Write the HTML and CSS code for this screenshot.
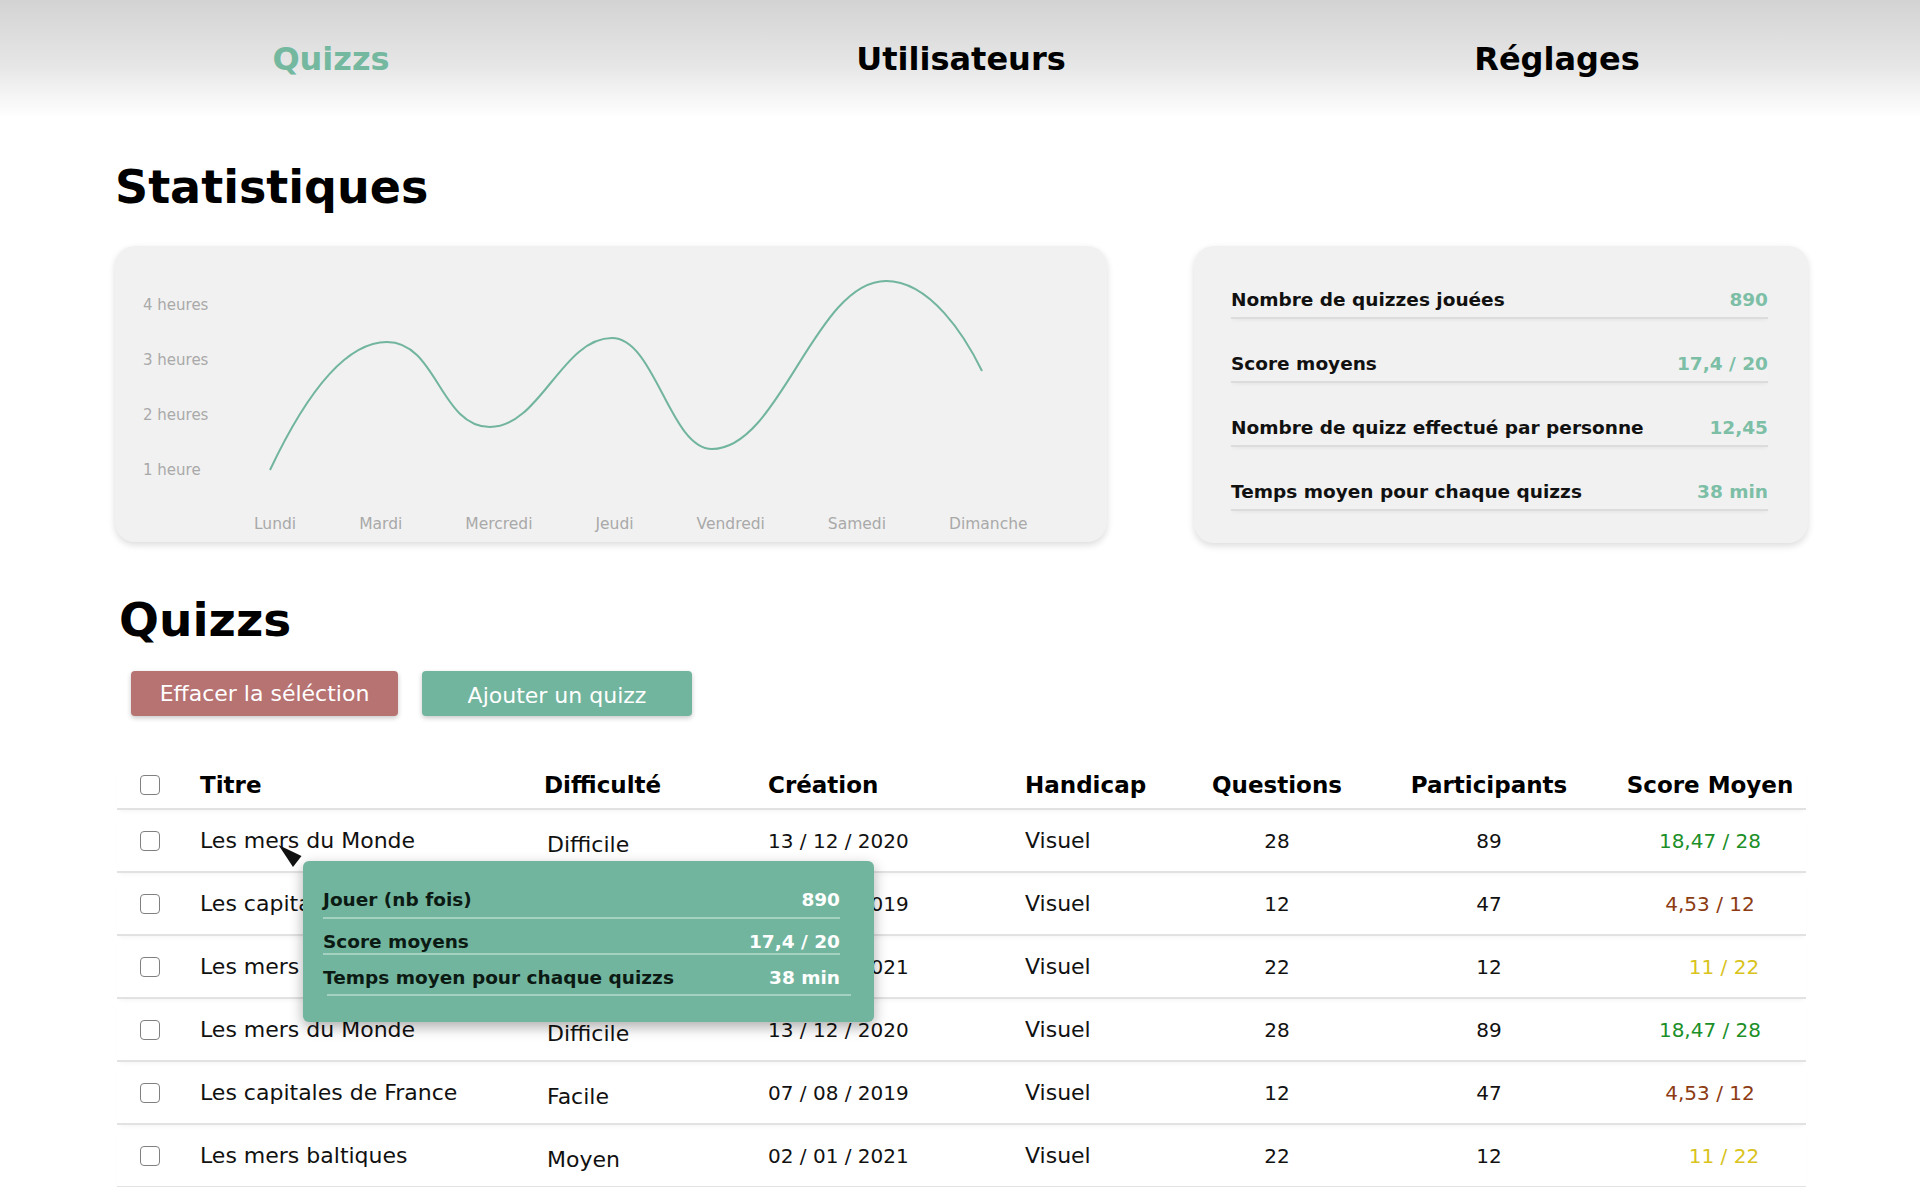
FILE: index.html
```html
<!DOCTYPE html>
<html lang="fr">
<head>
<meta charset="utf-8">
<title>Statistiques – Quizzs</title>
<link rel="stylesheet" href="styles.css">
</head>
<body>
<header class="nav">
  <a class="nav-item nav-quizzs active">Quizzs</a>
  <a class="nav-item nav-users">Utilisateurs</a>
  <a class="nav-item nav-settings">Réglages</a>
</header>

<main class="page">
  <h1 class="section-title">Statistiques</h1>

  <div class="stats-row">
    <section class="card chart-card">
      <div class="y-axis">
        <span>4 heures</span>
        <span>3 heures</span>
        <span>2 heures</span>
        <span>1 heure</span>
      </div>
      <div class="x-axis">
        <span>Lundi</span>
        <span>Mardi</span>
        <span>Mercredi</span>
        <span>Jeudi</span>
        <span>Vendredi</span>
        <span>Samedi</span>
        <span>Dimanche</span>
      </div>
      <svg class="curve" viewBox="0 0 992 296" width="992" height="296" aria-hidden="true">
        <path d="M155,224 C190,150 230,96 272,96 C322,96 325,181 375,181 C425,181 447,92 497,92 C540,92 555,203 597,203 C665,203 700,35 771,35 C815,35 850,90 867,125" fill="none" stroke="#72b59e" stroke-width="2"/>
      </svg>
    </section>

    <section class="card summary-card">
      <div class="summary-row"><span>Nombre de quizzes jouées</span><span class="summary-value">890</span></div>
      <div class="summary-row"><span>Score moyens</span><span class="summary-value">17,4 / 20</span></div>
      <div class="summary-row"><span>Nombre de quizz effectué par personne</span><span class="summary-value">12,45</span></div>
      <div class="summary-row summary-last"><span>Temps moyen pour chaque quizzs</span><span class="summary-value">38 min</span></div>
    </section>
  </div>

  <h1 class="section-title quizz-title">Quizzs</h1>

  <div class="actions">
    <button class="btn btn-danger">Effacer la séléction</button>
    <button class="btn btn-primary">Ajouter un quizz</button>
  </div>

  <div class="table">
    <div class="row head">
      <span class="cell"><span class="checkbox"></span></span>
      <span class="cell">Titre</span>
      <span class="cell">Difficulté</span>
      <span class="cell">Création</span>
      <span class="cell">Handicap</span>
      <span class="cell center">Questions</span>
      <span class="cell center">Participants</span>
      <span class="cell center">Score Moyen</span>
    </div>

    <div class="row">
      <span class="cell"><span class="checkbox"></span></span>
      <span class="cell">Les mers du Monde</span>
      <span class="cell low">Difficile</span>
      <span class="cell num">13 / 12 / 2020</span>
      <span class="cell">Visuel</span>
      <span class="cell center num">28</span>
      <span class="cell center num">89</span>
      <span class="cell center num score-good">18,47 / 28</span>
    </div>
    <div class="row">
      <span class="cell"><span class="checkbox"></span></span>
      <span class="cell">Les capitales de France</span>
      <span class="cell low">Facile</span>
      <span class="cell num">07 / 08 / 2019</span>
      <span class="cell">Visuel</span>
      <span class="cell center num">12</span>
      <span class="cell center num">47</span>
      <span class="cell center num score-bad">4,53 / 12</span>
    </div>
    <div class="row">
      <span class="cell"><span class="checkbox"></span></span>
      <span class="cell">Les mers baltiques</span>
      <span class="cell low">Moyen</span>
      <span class="cell num">02 / 01 / 2021</span>
      <span class="cell">Visuel</span>
      <span class="cell center num">22</span>
      <span class="cell center num">12</span>
      <span class="cell center num score-mid">11 / 22</span>
    </div>
    <div class="row">
      <span class="cell"><span class="checkbox"></span></span>
      <span class="cell">Les mers du Monde</span>
      <span class="cell low">Difficile</span>
      <span class="cell num">13 / 12 / 2020</span>
      <span class="cell">Visuel</span>
      <span class="cell center num">28</span>
      <span class="cell center num">89</span>
      <span class="cell center num score-good">18,47 / 28</span>
    </div>
    <div class="row">
      <span class="cell"><span class="checkbox"></span></span>
      <span class="cell">Les capitales de France</span>
      <span class="cell low">Facile</span>
      <span class="cell num">07 / 08 / 2019</span>
      <span class="cell">Visuel</span>
      <span class="cell center num">12</span>
      <span class="cell center num">47</span>
      <span class="cell center num score-bad">4,53 / 12</span>
    </div>
    <div class="row">
      <span class="cell"><span class="checkbox"></span></span>
      <span class="cell">Les mers baltiques</span>
      <span class="cell low">Moyen</span>
      <span class="cell num">02 / 01 / 2021</span>
      <span class="cell">Visuel</span>
      <span class="cell center num">22</span>
      <span class="cell center num">12</span>
      <span class="cell center num score-mid">11 / 22</span>
    </div>

    <svg class="pointer" viewBox="0 0 28 28" width="28" height="28" aria-hidden="true">
      <polygon points="1.5,2 24.5,13 16,24" fill="#111"/>
    </svg>

    <div class="tooltip">
      <div class="tip-row tip-first"><span>Jouer (nb fois)</span><span class="tip-value">890</span></div>
      <div class="tip-row tip-second"><span>Score moyens</span><span class="tip-value">17,4 / 20</span></div>
      <div class="tip-row tip-third"><span>Temps moyen pour chaque quizzs</span><span class="tip-value">38 min</span></div>
    </div>
  </div>
</main>
</body>
</html>
```

FILE: styles.css
```css
* {
  box-sizing: border-box;
}

html, body {
  margin: 0;
  padding: 0;
  background: #ffffff;
}

body {
  font-family: "DejaVu Sans", "Open Sans", sans-serif;
  color: #111111;
  width: 1920px;
  height: 1187px;
  overflow: hidden;
}

/* ---------- Navigation ---------- */
.nav {
  height: 118px;
  display: flex;
  align-items: flex-start;
  padding-left: 181px;
  background: linear-gradient(to bottom, #d3d3d3 0%, #e6e6e6 55%, #f7f7f7 85%, #ffffff 100%);
}

.nav-item {
  width: 300px;
  text-align: center;
  font-weight: 700;
  font-size: 32px;
  line-height: 38px;
  padding-top: 40px;
  color: #000000;
  text-decoration: none;
}

.nav-item.active {
  color: #74b89f;
}

.nav-users {
  margin-left: 330px;
}

.nav-settings {
  margin-left: 296px;
}

/* ---------- Page ---------- */
.page {
  padding: 0 112px 0 115px;
}

.section-title {
  margin: 43px 0 0 0;
  font-size: 46px;
  line-height: 52px;
  font-weight: 700;
  color: #000000;
}

.quizz-title {
  margin: 51px 0 0 4px;
  font-size: 47px;
}

/* ---------- Stats row ---------- */
.stats-row {
  margin-top: 33px;
  display: flex;
  gap: 87px;
}

.card {
  background: #f1f1f1;
  border-radius: 20px;
  box-shadow: 0 3px 7px rgba(0, 0, 0, 0.14);
}

.chart-card {
  position: relative;
  width: 992px;
  height: 296px;
  padding: 50px 0 0 28px;
}

.y-axis {
  display: flex;
  flex-direction: column;
  gap: 37px;
}

.y-axis span,
.x-axis span {
  font-size: 15px;
  line-height: 18px;
  color: #a9a9a9;
}

.x-axis {
  margin: 36px 0 0 111px;
  display: flex;
  gap: 63px;
}

.x-axis span {
  font-size: 15.5px;
}

.curve {
  position: absolute;
  left: 0;
  top: 0;
}

.summary-card {
  width: 614px;
  height: 297px;
  padding: 43px 40px 0 37px;
}

.summary-row {
  display: flex;
  justify-content: space-between;
  font-size: 18.5px;
  line-height: 22px;
  font-weight: 700;
  color: #111111;
  padding-bottom: 6px;
  border-bottom: 2px solid #dcdcdc;
  box-shadow: 0 3px 4px -2px rgba(0, 0, 0, 0.06);
  margin-bottom: 34px;
}

.summary-last {
  margin-bottom: 0;
}

.summary-value {
  color: #7cbfa6;
}

/* ---------- Actions ---------- */
.actions {
  margin: 25px 0 0 16px;
  display: flex;
  gap: 24px;
}

.btn {
  height: 45px;
  border: none;
  border-radius: 4px;
  font-family: "DejaVu Sans", "Open Sans", sans-serif;
  font-size: 22px;
  color: #ffffff;
  box-shadow: 0 2px 5px rgba(0, 0, 0, 0.22);
  padding: 0;
}

.btn-danger {
  width: 267px;
  background: #b77272;
}

.btn-primary {
  width: 270px;
  background: #72b59e;
  padding-top: 3px;
}

/* ---------- Table ---------- */
.table {
  position: relative;
  margin: 45px 0 0 2px;
  width: 1689px;
}

.row {
  display: grid;
  grid-template-columns: 60px 344px 224px 257px 165px 174px 250px 192px;
  padding-left: 23px;
  height: 63px;
  align-items: center;
  border-bottom: 2px solid #e2e2e2;
  box-shadow: 0 4px 5px -3px rgba(0, 0, 0, 0.05);
  font-size: 22px;
  color: #111111;
}

.row.head {
  height: 49px;
  font-size: 23px;
  font-weight: 700;
  color: #000000;
}

.cell {
  display: block;
  white-space: nowrap;
}

.cell.num {
  font-size: 20px;
}

.cell.center {
  text-align: center;
}

.cell.low {
  padding-top: 8px;
  padding-left: 3px;
}

.checkbox {
  display: block;
  width: 20px;
  height: 20px;
  border: 1.5px solid #808080;
  border-radius: 4px;
  background: #ffffff;
}

.score-good {
  color: #1c8f28;
}

.score-bad {
  color: #8c3b12;
}

.score-mid {
  color: #d9c31c;
  padding-left: 28px;
}

/* ---------- Tooltip ---------- */
.pointer {
  position: absolute;
  left: 160px;
  top: 82px;
}

.tooltip {
  position: absolute;
  left: 186px;
  top: 100px;
  width: 571px;
  height: 161px;
  background: #72b59e;
  border-radius: 6px;
  box-shadow: 0 5px 14px rgba(0, 0, 0, 0.32);
  padding: 28px 34px 0 20px;
}

.tip-row {
  display: flex;
  justify-content: space-between;
  font-size: 18.5px;
  line-height: 22px;
  font-weight: 700;
  color: #0c1a14;
  border-bottom: 2px solid #a4d1c0;
}

.tip-value {
  color: #ffffff;
}

.tip-first {
  padding-bottom: 6px;
}

.tip-second {
  padding-top: 12px;
}

.tip-third {
  padding-top: 12px;
  padding-bottom: 5px;
  margin-right: -11px;
  padding-right: 11px;
  margin-left: 4px;
}

.tip-third span:first-child {
  margin-left: -4px;
}
```
